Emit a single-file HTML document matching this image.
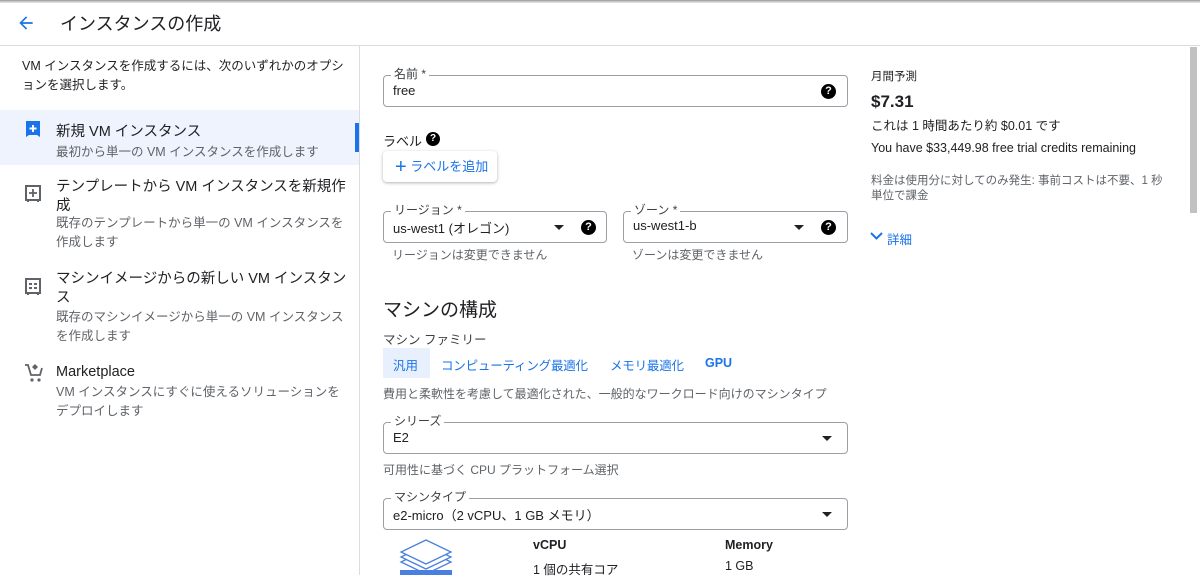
<!DOCTYPE html>
<html><head><meta charset="utf-8"><style>
*{margin:0;padding:0;box-sizing:border-box}
body{width:1200px;height:575px;overflow:hidden;background:#fff;font-family:"Liberation Sans","Noto Sans CJK JP",sans-serif;color:#202124;position:relative}
.a{position:absolute;white-space:nowrap}
.g{color:#5f6368}
.b{color:#1a73e8}
.f{position:absolute;border:1px solid #9aa0a6;border-radius:4px;height:32px}
.f .l{position:absolute;top:-9px;left:7px;background:#fff;padding:0 3px;font-size:12px;line-height:14px;color:#3c4043}
.f .v{position:absolute;left:9px;top:7px;font-size:13px}
.dd{position:absolute;top:13px;width:0;height:0;border-left:5px solid transparent;border-right:5px solid transparent;border-top:5px solid #202124}
.q{position:absolute;top:8px;width:15px;height:15px;border-radius:50%;background:#000;color:#fff;font-size:11px;font-weight:bold;text-align:center;line-height:15px}
</style></head><body>
<div class="a" style="left:0;top:0;width:1200px;height:3px;background:linear-gradient(#999,#eee)"></div>
<svg class="a" style="left:16px;top:13px" width="20" height="20" viewBox="0 0 24 24"><path d="M20 11H7.8l5.6-5.6L12 4l-8 8 8 8 1.4-1.4L7.8 13H20z" fill="#1a73e8"/></svg>
<div class="a" style="left:60px;top:10px;font-size:18px">インスタンスの作成</div>
<div class="a" style="left:0;top:45px;width:1200px;height:1px;background:#dadce0"></div>
<div class="a" style="left:359px;top:46px;width:1px;height:529px;background:#dadce0"></div>
<div class="a" style="left:22px;top:57px;font-size:12.5px;line-height:19px">VM インスタンスを作成するには、次のいずれかのオプシ<br>ョンを選択します。</div>
<div class="a" style="left:0;top:110px;width:359px;height:55px;background:#eef3fd"></div>
<div class="a" style="left:355px;top:123px;width:4px;height:29px;background:#1a73e8"></div>
<svg class="a" style="left:24px;top:120px" width="18" height="18" viewBox="0 0 18 18"><path d="M2 1h14v16l-3-2H5l-3 2z" fill="#1a73e8"/><path d="M9 5v7M5.5 8.5h7" stroke="#fff" stroke-width="2"/></svg>
<div class="a" style="left:56px;top:120px;font-size:14.5px">新規 VM インスタンス</div>
<div class="a g" style="left:56px;top:141px;font-size:12.5px">最初から単一の VM インスタンスを作成します</div>
<svg class="a" style="left:25px;top:185px" width="16" height="18" viewBox="0 0 16 18"><rect x="1" y="1" width="14" height="14" fill="none" stroke="#5f6368" stroke-width="2"/><path d="M8 4v8M4 8h8" stroke="#5f6368" stroke-width="1.8"/><path d="M3 15v2M13 15v2" stroke="#5f6368" stroke-width="2"/></svg>
<div class="a" style="left:56px;top:178px;font-size:14.5px;line-height:19px">テンプレートから VM インスタンスを新規作<br>成</div>
<div class="a g" style="left:56px;top:214px;font-size:12.5px;line-height:19px">既存のテンプレートから単一の VM インスタンスを<br>作成します</div>
<svg class="a" style="left:25px;top:278px" width="16" height="18" viewBox="0 0 16 18"><rect x="1" y="1" width="14" height="14" fill="none" stroke="#5f6368" stroke-width="2"/><path d="M4 6h8M4 10h8" stroke="#5f6368" stroke-width="2" stroke-dasharray="3 2"/><path d="M3 15v2M13 15v2" stroke="#5f6368" stroke-width="2"/></svg>
<div class="a" style="left:56px;top:270px;font-size:14.5px;line-height:19px">マシンイメージからの新しい VM インスタン<br>ス</div>
<div class="a g" style="left:56px;top:308px;font-size:12.5px;line-height:19px">既存のマシンイメージから単一の VM インスタンス<br>を作成します</div>
<svg class="a" style="left:24px;top:363px" width="20" height="20" viewBox="0 0 20 20"><path d="M1 2h3l3 10h9l2-7" fill="none" stroke="#5f6368" stroke-width="1.8"/><path d="M11 1l3 3-3 3-3-3z" fill="#5f6368"/><circle cx="8" cy="17" r="1.6" fill="#5f6368"/><circle cx="15" cy="17" r="1.6" fill="#5f6368"/></svg>
<div class="a" style="left:56px;top:364px;font-size:14.5px">Marketplace</div>
<div class="a g" style="left:56px;top:383px;font-size:12.5px;line-height:19px">VM インスタンスにすぐに使えるソリューションを<br>デプロイします</div>

<div class="f" style="left:383px;top:75px;width:465px"><span class="l">名前 *</span><span class="v">free</span><span class="q" style="right:11px">?</span></div>
<div class="a" style="left:383px;top:131px;font-size:13px">ラベル</div>
<div class="a" style="left:426px;top:132px;width:14px;height:14px;border-radius:50%;background:#000;color:#fff;font-size:10px;font-weight:bold;text-align:center;line-height:14px">?</div>
<div class="a b" style="left:383px;top:151px;width:114px;height:31px;border-radius:4px;box-shadow:0 1px 3px rgba(0,0,0,.3);font-size:13px;line-height:31px;padding-left:12px"><span style="font-size:20px;vertical-align:-2px">+</span> ラベルを追加</div>
<div class="f" style="left:383px;top:211px;width:224px"><span class="l">リージョン *</span><span class="v" style="top:6px">us-west1 (オレゴン)</span><span class="dd" style="left:170px"></span><span class="q" style="right:10px">?</span></div>
<div class="a g" style="left:392px;top:246px;font-size:12px">リージョンは変更できません</div>
<div class="f" style="left:623px;top:211px;width:225px"><span class="l">ゾーン *</span><span class="v" style="top:6px">us-west1-b</span><span class="dd" style="left:170px"></span><span class="q" style="right:11px">?</span></div>
<div class="a g" style="left:632px;top:246px;font-size:12px">ゾーンは変更できません</div>
<div class="a" style="left:383px;top:295px;font-size:19px">マシンの構成</div>
<div class="a" style="left:383px;top:329px;font-size:12.5px;color:#3c4043">マシン ファミリー</div>
<div class="a" style="left:383px;top:348px;width:47px;height:30px;background:#e8f0fe"></div>
<div class="a b" style="left:393px;top:355px;font-size:12.5px">汎用</div>
<div class="a b" style="left:441px;top:355px;font-size:12.5px;letter-spacing:-0.2px">コンピューティング最適化</div>
<div class="a b" style="left:610px;top:355px;font-size:12.5px;letter-spacing:-0.2px">メモリ最適化</div>
<div class="a b" style="left:705px;top:356px;font-size:12.5px;font-weight:bold">GPU</div>
<div class="a g" style="left:383px;top:385px;font-size:12px">費用と柔軟性を考慮して最適化された、一般的なワークロード向けのマシンタイプ</div>
<div class="f" style="left:383px;top:422px;width:465px"><span class="l">シリーズ</span><span class="v">E2</span><span class="dd" style="left:438px"></span></div>
<div class="a g" style="left:383px;top:461px;font-size:12px">可用性に基づく CPU プラットフォーム選択</div>
<div class="f" style="left:383px;top:498px;width:465px"><span class="l">マシンタイプ</span><span class="v" style="top:6px">e2-micro（2 vCPU、1 GB メモリ）</span><span class="dd" style="left:438px"></span></div>
<svg class="a" style="left:398px;top:536px" width="56" height="39" viewBox="0 0 56 39"><path d="M28 28L3 16 28 4l25 12z" fill="#fff" stroke="#4a7fe0" stroke-width="1.3" transform="translate(0,10)"/><path d="M28 28L3 16 28 4l25 12z" fill="#fff" stroke="#4a7fe0" stroke-width="1.3" transform="translate(0,5)"/><path d="M28 28L3 16 28 4l25 12z" fill="#fff" stroke="#4a7fe0" stroke-width="1.3"/><rect x="2" y="34" width="52" height="5" fill="#4a7fe0"/></svg>
<div class="a" style="left:533px;top:538px;font-size:12.5px;font-weight:bold">vCPU</div>
<div class="a" style="left:725px;top:538px;font-size:12.5px;font-weight:bold">Memory</div>
<div class="a" style="left:533px;top:559px;font-size:12.5px">1 個の共有コア</div>
<div class="a" style="left:725px;top:559px;font-size:12.5px">1 GB</div>

<div class="a" style="left:871px;top:68px;font-size:11.5px">月間予測</div>
<div class="a" style="left:871px;top:92px;font-size:17px;font-weight:bold">$7.31</div>
<div class="a" style="left:871px;top:115px;font-size:12.5px">これは 1 時間あたり約 $0.01 です</div>
<div class="a" style="left:871px;top:141px;font-size:12.5px">You have $33,449.98 free trial credits remaining</div>
<div class="a g" style="left:871px;top:174px;font-size:11.5px;line-height:15px">料金は使用分に対してのみ発生: 事前コストは不要、1 秒<br>単位で課金</div>
<svg class="a" style="left:870px;top:232px" width="13" height="9" viewBox="0 0 13 9"><path d="M1 1l5.5 5.5L12 1" fill="none" stroke="#1a73e8" stroke-width="2"/></svg>
<div class="a b" style="left:887px;top:229px;font-size:12.5px">詳細</div>
<div class="a" style="left:1190px;top:47px;width:7px;height:166px;background:#c1c1c1"></div>
</body></html>
